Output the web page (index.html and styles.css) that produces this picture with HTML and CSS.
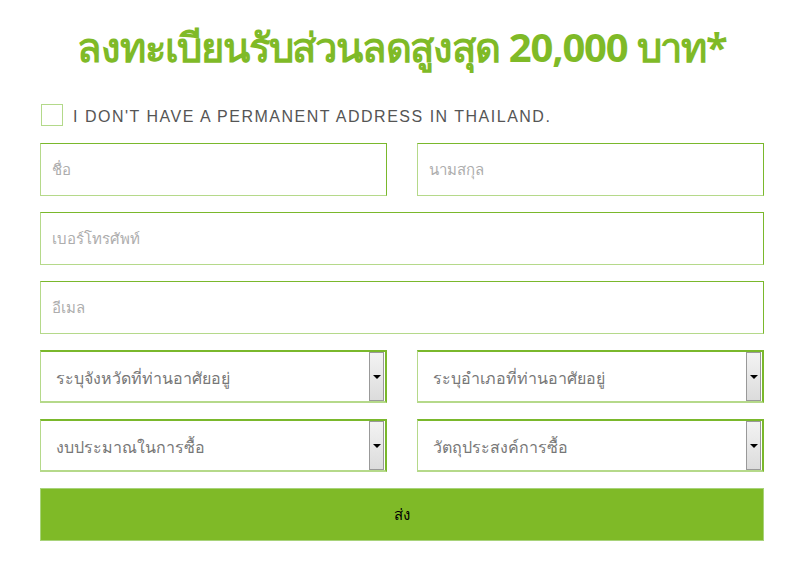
FILE: index.html
```html
<!DOCTYPE html>
<html lang="th">
<head>
    <meta charset="UTF-8">
    <meta name="viewport" content="width=device-width, initial-scale=1.0">
    <title>ลงทะเบียน</title>
    <link rel="stylesheet" href="styles.css">
</head>
<body>
    <div class="form-wrap">
        <h1 class="form-title">ลงทะเบียนรับส่วนลดสูงสุด 20,000 บาท*</h1>

        <label class="no-address">
            <span class="check-box"></span>
            <span class="check-label">I DON'T HAVE A PERMANENT ADDRESS IN THAILAND.</span>
        </label>

        <div class="row two">
            <div class="field"><span class="ph">ชื่อ</span></div>
            <div class="field"><span class="ph">นามสกุล</span></div>
        </div>
        <div class="row">
            <div class="field"><span class="ph">เบอร์โทรศัพท์</span></div>
        </div>
        <div class="row">
            <div class="field"><span class="ph">อีเมล</span></div>
        </div>
        <div class="row two">
            <div class="field select"><span class="sel-text">ระบุจังหวัดที่ท่านอาศัยอยู่</span><span class="sel-btn"></span></div>
            <div class="field select"><span class="sel-text">ระบุอำเภอที่ท่านอาศัยอยู่</span><span class="sel-btn"></span></div>
        </div>
        <div class="row two">
            <div class="field select"><span class="sel-text">งบประมาณในการซื้อ</span><span class="sel-btn"></span></div>
            <div class="field select"><span class="sel-text">วัตถุประสงค์การซื้อ</span><span class="sel-btn"></span></div>
        </div>

        <div class="submit">ส่ง</div>
    </div>
</body>
</html>
```

FILE: styles.css
```css
body {
    margin: 0;
    background: #fff;
    font-family: "Noto Sans", "DejaVu Sans", sans-serif;
}
.form-wrap {
    width: 724px;
    margin: 0 36px 0 40px;
    padding-top: 22px;
}
.form-title {
    margin: 0;
    text-align: center;
    color: #7fba27;
    font-size: 40px;
    font-weight: bold;
    line-height: 50px;
    letter-spacing: -1.2px;
}
.no-address {
    display: flex;
    align-items: center;
    gap: 10px;
    margin: 32px 0 17px 1px;
}
.check-box {
    width: 20px;
    height: 20px;
    border: 1px solid #b3d98a;
}
.check-label {
    font-family: "Liberation Sans", Arial, sans-serif;
    font-size: 16px;
    color: #555;
    letter-spacing: 1.5px;
    padding-top: 3px;
}
.row {
    display: grid;
    grid-template-columns: 1fr;
    column-gap: 30px;
    margin-bottom: 16px;
}
.row.two {
    grid-template-columns: 1fr 1fr;
}
.field {
    height: 53px;
    box-sizing: border-box;
    border: 1px solid;
    border-color: #7ab82c #7ab82c #b5d98a #b5d98a;
    display: flex;
    align-items: center;
    padding-left: 11px;
}
.ph {
    color: #adadad;
    font-size: 15px;
}
.field.select {
    padding: 0 1px 0 15px;
    align-items: stretch;
    border-width: 2px 2px 2px 1px;
}
.sel-text {
    flex: 1;
    align-self: center;
    color: #777;
    font-size: 16px;
    padding-top: 3px;
}
.sel-btn {
    width: 13px;
    border: 1px solid #999;
    background: linear-gradient(#f3f3f3, #dcdcdc);
    position: relative;
}
.sel-btn::after {
    content: "";
    position: absolute;
    left: 3px;
    top: 22px;
    border-left: 4px solid transparent;
    border-right: 4px solid transparent;
    border-top: 4px solid #000;
}
.submit {
    height: 53px;
    margin-top: 2px;
    background: #7fba27;
    border: 1px solid #a8d37a;
    box-sizing: border-box;
    display: flex;
    align-items: center;
    justify-content: center;
    font-size: 15px;
    color: #000;
}
```
